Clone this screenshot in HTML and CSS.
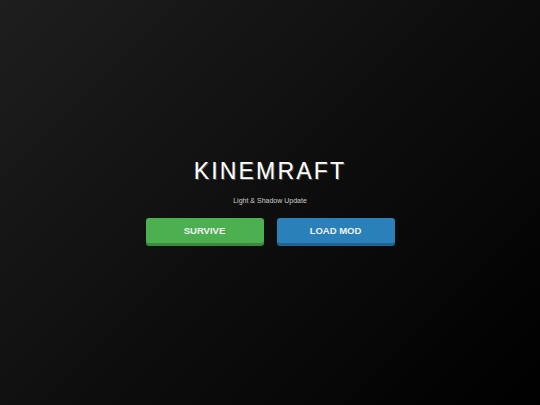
FILE: index.html
```html
<!DOCTYPE html>
<html>
<head>
<meta charset="utf-8">
<link rel="stylesheet" href="styles.css">
</head>
<body>
<main class="screen">
  <h1 class="title">KINEMRAFT</h1>
  <p class="subtitle">Light &amp; Shadow Update</p>
  <div class="actions">
    <button class="btn btn-green">SURVIVE</button>
    <button class="btn btn-blue">LOAD MOD</button>
  </div>
</main>
</body>
</html>
```

FILE: styles.css
```css
html, body {
  margin: 0;
  padding: 0;
  height: 100%;
}
body {
  background: linear-gradient(135deg, #1e1e1e 0%, #0e0e0e 50%, #000 100%);
  font-family: "Liberation Sans", Arial, sans-serif;
  color: #fff;
}
.screen {
  height: 405px;
  box-sizing: border-box;
  padding-bottom: 6px;
  display: flex;
  flex-direction: column;
  align-items: center;
  justify-content: center;
}
.title {
  margin: 0;
  font-size: 23px;
  font-weight: normal;
  letter-spacing: 2.2px;
  line-height: 26px;
  color: #fff;
  text-shadow: 1px 1px 0 #555;
  padding-top: 4px;
}
.subtitle {
  margin: 12px 0 0;
  font-size: 7px;
  line-height: 10px;
  color: #ccc;
}
.actions {
  margin-top: 12px;
  display: flex;
  gap: 13px;
}
.btn {
  width: 118px;
  height: 25px;
  border: none;
  border-radius: 3px;
  font-family: "Liberation Sans", Arial, sans-serif;
  font-weight: bold;
  font-size: 9.5px;
  color: #f2f2f2;
  padding: 0;
  margin-bottom: 3px;
}
.btn-green {
  background: #4caf50;
  box-shadow: 0 3px 0 #3a8a3d;
}
.btn-blue {
  background: #2a80b9;
  box-shadow: 0 3px 0 #1f6391;
}
```
